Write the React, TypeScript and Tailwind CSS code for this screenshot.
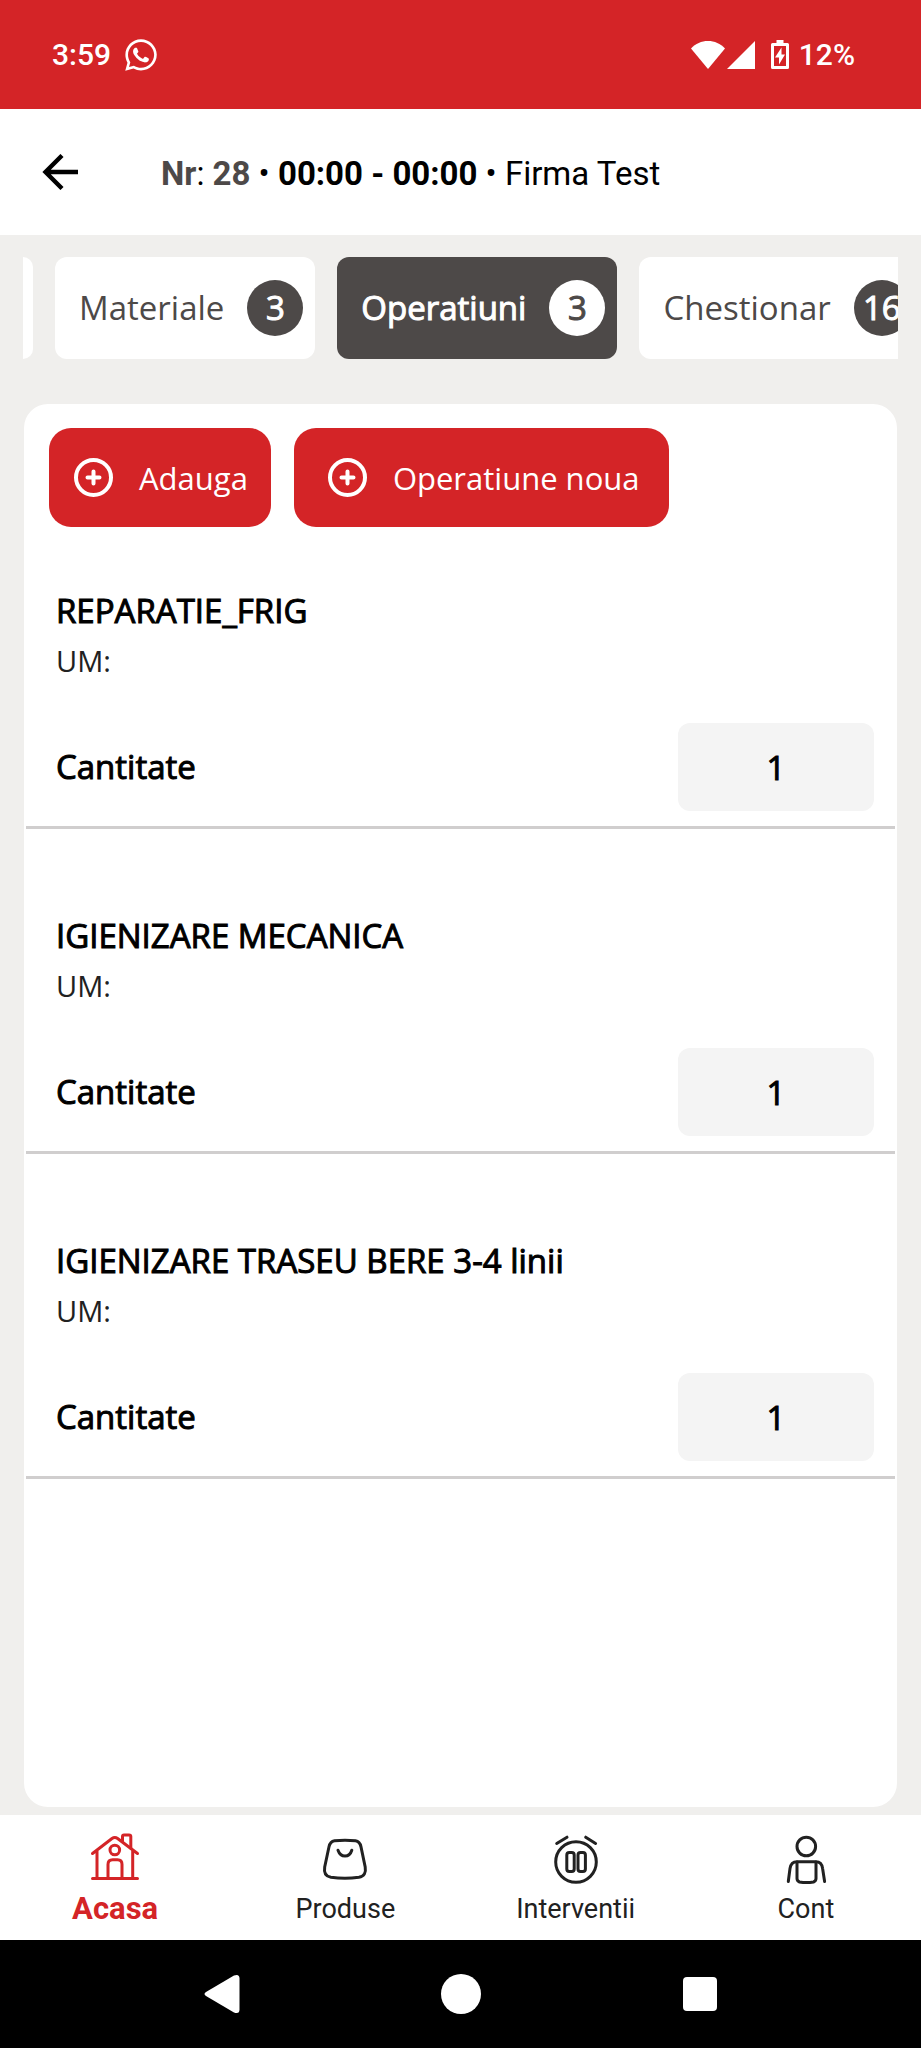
import React, { useState } from "react";
import clsx from "clsx";
import { FaWhatsapp } from "react-icons/fa";

const tabs = [
  { label: "Materiale", count: 3 },
  { label: "Operatiuni", count: 3 },
  { label: "Chestionar", count: 16 },
];

const initialOperations = [
  { id: "op-1", name: "REPARATIE_FRIG", quantity: "1" },
  { id: "op-2", name: "IGIENIZARE MECANICA", quantity: "1" },
  { id: "op-3", name: "IGIENIZARE TRASEU BERE 3-4 linii", quantity: "1" },
];

const StatusBar = () => (
  <div className="flex h-[109px] items-center justify-between bg-[#d42427] pl-[52px] pr-[66px] text-[30px] font-medium leading-9 text-white">
    <div className="flex items-center gap-3">
      <span>3:59</span>
      <FaWhatsapp className="size-9" />
    </div>
    <div className="flex items-center">
      <svg className="h-[30px] w-[34px]" viewBox="0 0 34 30" fill="currentColor">
        <path d="M17 29 0 8.500C4.500 3.500 10.500 1 17 1s12.500 2.500 17 7.500Z" />
      </svg>
      <svg className="ml-0.5 h-[30px] w-7" viewBox="0 0 28 30" fill="currentColor">
        <path d="M28 1v28H0Z" />
      </svg>
      <svg className="ml-4 h-[30px] w-[18px]" viewBox="0 0 18 30">
        <path
          d="M5.500 0h7v3H16.500Q18 3 18 4.500V27.500Q18 29 16.500 29H1.500Q0 29 0 27.500V4.500Q0 3 1.500 3h4Z"
          fill="currentColor"
        />
        <path d="M3 6h12v20H3Z" fill="#d42427" />
        <path d="M10.500 7.500 4 17.500h4v7l6-10h-3.500Z" fill="currentColor" />
      </svg>
      <span className="ml-2.5">12%</span>
    </div>
  </div>
);

const Header = () => (
  <header className="flex h-[126px] items-center bg-white pl-[42px]">
    <button type="button" aria-label="Inapoi" className="size-9">
      <svg viewBox="0 0 36 36" fill="none" stroke="black" strokeWidth="4.400">
        <path d="M36.500 18H4M20 1.500 3.500 18 20 34.500" />
      </svg>
    </button>
    <h1 className="ml-[83px] pt-1 text-[33px] leading-10 text-black">
      <span className="font-bold text-[#4d4948]">Nr</span>:{" "}
      <span className="font-bold text-[#4d4948]">28</span> •{" "}
      <span className="font-bold">00:00 - 00:00</span> • Firma Test
    </h1>
  </header>
);

interface TabsProps {
  active: string;
  onChange: (label: string) => void;
}

const Tabs = ({ active, onChange }: TabsProps) => (
  <nav className="mx-[23px] flex gap-[22px] overflow-hidden text-[33px] leading-[46px]">
    {/* end of the tab that is scrolled out to the left */}
    <div className="w-2.5 shrink-0 rounded-r-xl bg-white" />
    {tabs.map(({ label, count }) => {
      const isActive = label === active;
      return (
        <button
          key={label}
          type="button"
          onClick={() => onChange(label)}
          className={clsx(
            "flex h-[102px] shrink-0 items-center gap-[23px] rounded-xl pl-6 pr-3",
            isActive
              ? "bg-[#4d4948] text-white [-webkit-text-stroke:1px]"
              : "bg-white text-[#4d4948]"
          )}
        >
          {label}
          <span
            className={clsx(
              "flex size-14 items-center justify-center rounded-full [-webkit-text-stroke:1px]",
              isActive ? "bg-white text-[#4d4948]" : "bg-[#4d4948] text-white"
            )}
          >
            {count}
          </span>
        </button>
      );
    })}
  </nav>
);

const PlusIcon = () => (
  <svg
    className="size-[39px]"
    viewBox="0 0 39 39"
    fill="none"
    stroke="currentColor"
    strokeWidth="4"
    strokeLinecap="round"
  >
    <circle cx="19.500" cy="19.500" r="17.500" />
    <path d="M19.500 13.500v12M13.500 19.500h12" />
  </svg>
);

const navItems = [
  {
    label: "Acasa",
    icon: (
      <>
        <path d="M1.500 46.500h45M6 46V18.500M41.700 46V18.500M1.500 21.500 21 6.500q2.800-2 5.600 0l19.900 15" />
        <path d="M31.500 9V4.500q0-1.500 1.500-1.500h5q1.800 0 1.800 1.500V16" />
        <circle cx="23.800" cy="18" r="4.800" />
        <path d="M17 46V32.500q0-4.700 4.700-4.700h4.800q4.500 0 4.500 4.700V46" />
      </>
    ),
  },
  {
    label: "Produse",
    icon: (
      <>
        <path d="M13.500 8.800q10.500-1 21 0 4.300.6 5.500 6l4.200 20.200q1.500 9-6.300 10.300-14 1.800-28 0-7.700-1.300-6.200-10.300L8 14.800q1.200-5.400 5.500-6Z" />
        <path d="M17 18.200q2 5.800 7 5.800t6.800-5.800" />
      </>
    ),
  },
  {
    label: "Interventii",
    icon: (
      <>
        <circle cx="24" cy="30" r="20.300" />
        <rect x="14.800" y="20.500" width="7.400" height="19" rx="2.500" />
        <rect x="26" y="20.500" width="7.400" height="19" rx="2.500" />
        <path d="M4.700 11.500 15 5.200M43.600 11.500 33.700 5.200" />
      </>
    ),
  },
  {
    label: "Cont",
    icon: (
      <>
        <circle cx="24.300" cy="14.500" r="9.300" />
        <path d="M6.300 49.500 8 36.500q1-6.800 7-6.800h18.800q6 0 6.800 6.800l2 13" />
        <path d="M15 30v16.500q0 2.500 2.500 3.500 7 1.200 14 0 2.500-1 2.500-3.500V30" />
      </>
    ),
  },
];

const BottomNav = () => (
  <nav className="grid grid-cols-4 bg-white pb-[15px] pt-[17px]">
    {navItems.map(({ label, icon }, index) => (
      <a
        key={label}
        href="#"
        className={clsx(
          "flex flex-col items-center gap-[9px] leading-8",
          index === 0
            ? "text-[31px] font-bold text-[#d42427]"
            : "text-[27px] text-[#212121]"
        )}
      >
        <svg
          className="h-[52px] w-12 overflow-visible"
          viewBox="0 0 48 52"
          fill="none"
          stroke="currentColor"
          strokeWidth="3"
          strokeLinecap="round"
          strokeLinejoin="round"
        >
          {icon}
        </svg>
        {label}
      </a>
    ))}
  </nav>
);

const SystemNav = () => (
  <div className="flex h-[108px] items-center justify-center gap-[199px] bg-black">
    <button type="button" aria-label="Back" className="size-10">
      <svg viewBox="0 0 40 40" fill="white">
        <path d="M4 18 32 1.500Q37.500-.5 37.500 4.500V35.500Q37.500 40.500 32 38.500L4 22Q1 20 4 18Z" />
      </svg>
    </button>
    <button type="button" aria-label="Home" className="size-10 rounded-full bg-white" />
    <button type="button" aria-label="Recents" className="flex size-10 items-center justify-center">
      <span className="size-[34px] rounded bg-white" />
    </button>
  </div>
);

export default function App() {
  const [activeTab, setActiveTab] = useState("Operatiuni");
  const [operations, setOperations] = useState(initialOperations);

  const setQuantity = (id: string, quantity: string) => {
    setOperations((prev) =>
      prev.map((op) => (op.id === id ? { ...op, quantity } : op))
    );
  };

  return (
    <div className="flex min-h-screen flex-col bg-[#f0efed] font-[Roboto,sans-serif]">
      <StatusBar />
      <Header />
      <main className="flex flex-1 flex-col pb-2 pt-[22px] font-['Open_Sans',sans-serif]">
        <Tabs active={activeTab} onChange={setActiveTab} />
        <section className="mx-6 mt-[45px] flex-1 rounded-3xl bg-white pt-6">
          <div className="flex gap-[23px] pl-[25px] text-[31px] leading-[42px] text-white">
            <button
              type="button"
              className="flex h-[99px] items-center gap-[26px] rounded-[22px] bg-[#d42427] pl-[25px] pr-[23px]"
            >
              <PlusIcon />
              Adauga
            </button>
            <button
              type="button"
              className="flex h-[99px] items-center gap-[26px] rounded-[22px] bg-[#d42427] pl-[34px] pr-[29px]"
            >
              <PlusIcon />
              Operatiune noua
            </button>
          </div>

          <ul className="mx-0.5 flex flex-col gap-[82px] pt-[59px] text-[33px] text-black">
            {operations.map((op) => (
              <li
                key={op.id}
                className="border-b-3 border-[#d0cece] pb-[15px] pl-[30px] pr-[21px]"
              >
                <h2 className="leading-[50px] [-webkit-text-stroke:1px]">{op.name}</h2>
                <p className="mt-[5px] text-[29px] leading-10 text-[#212121]">UM:</p>
                <div className="mt-[42px] flex items-center justify-between [-webkit-text-stroke:1px]">
                  <label htmlFor={op.id}>Cantitate</label>
                  <input
                    id={op.id}
                    type="text"
                    inputMode="numeric"
                    value={op.quantity}
                    onChange={(e) => setQuantity(op.id, e.target.value)}
                    className="h-[88px] w-[196px] rounded-xl bg-[#f4f4f4] text-center"
                  />
                </div>
              </li>
            ))}
          </ul>
        </section>
      </main>
      <BottomNav />
      <SystemNav />
    </div>
  );
}
